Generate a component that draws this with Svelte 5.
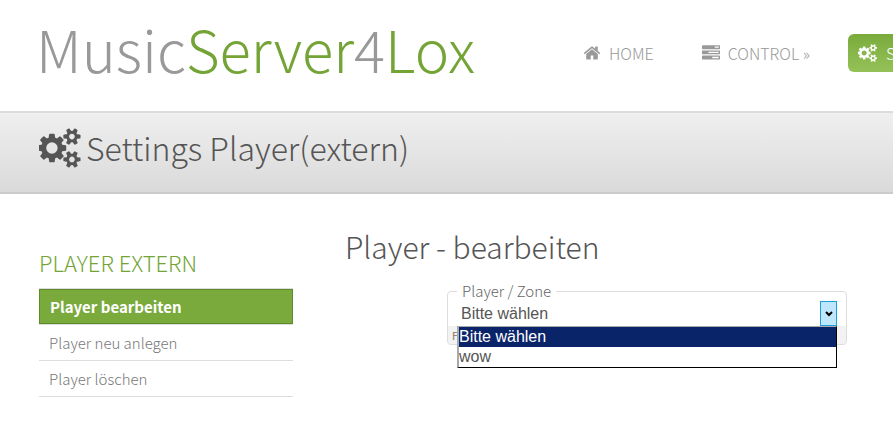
<script>
  const menu = [
    { label: 'HOME', icon: 'home' },
    { label: 'CONTROL »', icon: 'tasks' },
    { label: 'SETTINGS »', icon: 'cogs', active: true },
  ];

  const pages = ['Player bearbeiten', 'Player neu anlegen', 'Player löschen'];
  const zones = ['Bitte wählen', 'wow'];

  let currentPage = $state(0);
  let zone = $state(zones[0]);
  let open = $state(true);

  function toggle(event) {
    event.preventDefault();
    open = !open;
  }

  function choose(name) {
    zone = name;
    open = false;
  }
</script>

{#snippet icon(name)}
  {#if name === 'home'}
    <svg class="icon" viewBox="0 0 1792 1792" aria-hidden="true">
      <path d="M1472 992v480q0 26-19 45t-45 19h-384v-384h-256v384h-384q-26 0-45-19t-19-45v-480q0-1 .5-3t.5-3l575-474 575 474q1 2 1 6zm223-69l-62 74q-8 9-21 11h-3q-13 0-21-7l-692-577-692 577q-12 8-24 7-13-2-21-11l-62-74q-8-10-7-23.5t11-21.5l719-599q32-26 76-26t76 26l244 204v-195q0-14 9-23t23-9h192q14 0 23 9t9 23v408l219 182q10 8 11 21.5t-7 23.5z" />
    </svg>
  {:else if name === 'tasks'}
    <svg class="icon" viewBox="0 0 1792 1792" aria-hidden="true">
      <path d="M1024 1408h640v-128h-640v128zm-384-512h1024v-128h-1024v128zm640-512h384v-128h-384v128zm512 832v256q0 26-19 45t-45 19h-1664q-26 0-45-19t-19-45v-256q0-26 19-45t45-19h1664q26 0 45 19t19 45zm0-512v256q0 26-19 45t-45 19h-1664q-26 0-45-19t-19-45v-256q0-26 19-45t45-19h1664q26 0 45 19t19 45zm0-512v256q0 26-19 45t-45 19h-1664q-26 0-45-19t-19-45v-256q0-26 19-45t45-19h1664q26 0 45 19t19 45z" />
    </svg>
  {:else}
    <svg class="icon wide" viewBox="0 0 1920 1792" aria-hidden="true">
      <path d="M832 896q0-106-75-181t-181-75-181 75-75 181 75 181 181 75 181-75 75-181zm768 512q0-52-38-90t-90-38-90 38-38 90q0 53 37.5 90.5t90.5 37.5 90.5-37.5 37.5-90.5zm0-1024q0-52-38-90t-90-38-90 38-38 90q0 53 37.5 90.5t90.5 37.5 90.5-37.5 37.5-90.5zm-384 421v185q0 10-7 19.5t-16 10.5l-155 24q-11 35-32 76 34 48 90 115 7 11 7 20 0 12-7 19-23 30-82.5 89.5t-78.5 59.5q-11 0-21-7l-115-90q-37 19-77 31-11 108-23 155-7 24-30 24h-186q-11 0-20-7.5t-10-17.5l-23-153q-34-10-75-31l-118 89q-7 7-20 7-11 0-21-8-144-133-144-160 0-9 7-19 10-14 41-53t47-61q-23-44-35-82l-152-24q-10-1-17-9.5t-7-19.5v-185q0-10 7-19.5t16-10.5l155-24q11-35 32-76-34-48-90-115-7-11-7-20 0-12 7-20 22-30 82-89t79-59q11 0 21 7l115 90q34-18 77-32 11-108 23-154 7-24 30-24h186q11 0 20 7.5t10 17.5l23 153q34 10 75 31l118-89q8-7 20-7 11 0 21 8 144 133 144 160 0 8-7 19-12 16-42 54t-45 60q23 48 34 82l152 23q10 2 17 10.5t7 19.5zm640 533v140q0 16-149 31-12 27-30 52 51 113 51 138 0 4-4 7-122 71-124 71-8 0-46-47t-52-68q-20 2-30 2t-30-2q-14 21-52 68t-46 47q-2 0-124-71-4-3-4-7 0-25 51-138-18-25-30-52-149-15-149-31v-140q0-16 149-31 13-29 30-52-51-113-51-138 0-4 4-7 4-2 35-20t59-34 30-16q8 0 46 46.5t52 67.5q20-2 30-2t30 2q51-71 92-112l6-2q4 0 124 70 4 3 4 7 0 25-51 138 17 23 30 52 149 15 149 31zm0-1024v140q0 16-149 31-12 27-30 52 51 113 51 138 0 4-4 7-122 71-124 71-8 0-46-47t-52-68q-20 2-30 2t-30-2q-14 21-52 68t-46 47q-2 0-124-71-4-3-4-7 0-25 51-138-18-25-30-52-149-15-149-31v-140q0-16 149-31 13-29 30-52-51-113-51-138 0-4 4-7 4-2 35-20t59-34 30-16q8 0 46 46.5t52 67.5q20-2 30-2t30 2q51-71 92-112l6-2q4 0 124 70 4 3 4 7 0 25-51 138 17 23 30 52 149 15 149 31z" />
    </svg>
  {/if}
{/snippet}

<header>
  <a class="logo" href="#home">Music<span>Server</span>4<span>Lox</span></a>
  <nav>
    {#each menu as item}
      <a href="#{item.icon}" class:active={item.active}>
        {@render icon(item.icon)}
        {item.label}
      </a>
    {/each}
  </nav>
</header>

<div class="banner">
  {@render icon('cogs')}
  <h1>Settings Player(extern)</h1>
</div>

<div class="content">
  <aside>
    <h3>PLAYER EXTERN</h3>
    <ul>
      {#each pages as page, i}
        <li>
          <a href="#page-{i}" class:current={i === currentPage} onclick={() => (currentPage = i)}>{page}</a>
        </li>
      {/each}
    </ul>
  </aside>

  <main>
    <h2>Player - bearbeiten</h2>
    <form>
      <fieldset>
        <legend><label for="zone">Player / Zone</label></legend>
        <div class="picker">
          <select id="zone" bind:value={zone} onmousedown={toggle}>
            {#each zones as name}
              <option>{name}</option>
            {/each}
          </select>
          <span class="arrow">
            <svg viewBox="0 0 8 6" aria-hidden="true"><path d="M1 1l3 3 3-3" /></svg>
          </span>
          {#if open}
            <div class="options" role="listbox">
              {#each zones as name}
                <button type="button" role="option" aria-selected={name === zone} onclick={() => choose(name)}>{name}</button>
              {/each}
            </div>
          {/if}
        </div>
        <div class="hint">F</div>
      </fieldset>
    </form>
  </main>
</div>

<style>
  :global(body) {
    margin: 0;
    background: #fff;
    color: #555;
    font-family: 'Noto Sans CJK SC', 'Open Sans', sans-serif;
    font-weight: 300;
    overflow-x: hidden;
  }

  h1,
  h2,
  h3 {
    margin: 0;
    font-weight: 300;
    white-space: nowrap;
  }

  a {
    text-decoration: none;
  }

  .icon {
    width: 18px;
    height: 18px;
    flex: none;
    fill: currentColor;
  }

  .icon.wide {
    width: 20px;
  }

  header {
    display: flex;
    align-items: center;
    gap: 98px;
    height: 111px;
    padding: 0 0 6px 36px;
    box-sizing: border-box;
    overflow: hidden;
  }

  .logo {
    flex: none;
    padding-bottom: 10px;
    color: #999;
    font-size: 58px;
    line-height: 96px;
  }

  .logo span {
    color: #74a436;
  }

  nav {
    display: flex;
    gap: 28px;
  }

  nav a {
    display: flex;
    align-items: center;
    gap: 8px;
    padding: 0 10px;
    border-radius: 6px;
    color: #999;
    font-size: 16px;
    line-height: 38px;
    white-space: nowrap;
  }

  nav a.active {
    color: #fff;
    background: linear-gradient(#7aaa3c, #95c258);
  }

  .banner {
    display: flex;
    align-items: center;
    gap: 4px;
    padding: 0 39px 10px;
    border-top: 2px solid #dcdcdc;
    border-bottom: 2px solid #ccc;
    background: linear-gradient(#efefef, #dadada);
  }

  .banner .icon {
    width: 43px;
    height: 40px;
  }

  h1 {
    font-size: 32px;
    line-height: 69px;
  }

  .content {
    display: flex;
    gap: 52px;
    padding: 26px 39px;
  }

  aside {
    flex: none;
    width: 254px;
    padding-top: 24px;
  }

  h3 {
    color: #74a436;
    font-size: 22px;
    line-height: 36px;
  }

  ul {
    margin: 8px 0 0;
    padding: 0;
    list-style: none;
    border-top: 1px solid #ddd;
  }

  li {
    border-bottom: 1px solid #ddd;
  }

  li a {
    display: block;
    padding: 0 10px;
    color: #777;
    font-size: 15px;
    line-height: 35px;
  }

  li a.current {
    border: 1px solid #5d8a2b;
    background: #7aaa3c;
    color: #fff;
    font-weight: 700;
    line-height: 33px;
  }

  main {
    flex: 1;
    min-width: 0;
  }

  h2 {
    font-size: 30px;
    line-height: 52px;
  }

  form {
    margin: 9px 0 0 102px;
    max-width: 400px;
  }

  fieldset {
    margin: 0;
    padding: 0;
    min-width: 0;
    border: 1px solid #ddd;
    border-radius: 4px;
  }

  legend {
    margin-left: 9px;
    padding: 0 5px;
    color: #666;
    font-size: 15px;
    line-height: 20px;
  }

  .picker {
    position: relative;
    display: flex;
    margin: 0 9px;
  }

  select {
    flex: 1;
    min-width: 0;
    height: 25px;
    padding: 0 4px;
    border: 0;
    appearance: none;
    background: #fff;
    color: #555;
    font: 16px 'Liberation Sans', sans-serif;
  }

  .arrow {
    display: flex;
    align-items: center;
    justify-content: center;
    width: 15px;
    border: 1px solid #1e9fdd;
    background: #bee6fd;
    pointer-events: none;
  }

  .arrow svg {
    width: 8px;
    height: 6px;
    fill: none;
    stroke: #000;
    stroke-width: 2;
  }

  .options {
    position: absolute;
    top: 100%;
    left: 0;
    right: 0;
    border: 1px solid #000;
    border-top-color: #aaa;
    border-left: 2px solid #aaa;
    background: #fff;
  }

  .options button {
    display: block;
    width: 100%;
    padding: 0;
    border: 0;
    background: #fff;
    color: #555;
    font: 16px/20px 'Liberation Sans', sans-serif;
    text-align: left;
  }

  .options button[aria-selected='true'] {
    background: #0a246a;
    color: #fff;
  }

  .hint {
    padding: 0 4px;
    border-radius: 0 0 4px 4px;
    background: #f2f2f2;
    color: #8a7560;
    font-size: 11px;
    font-weight: 400;
    line-height: 18px;
  }
</style>
